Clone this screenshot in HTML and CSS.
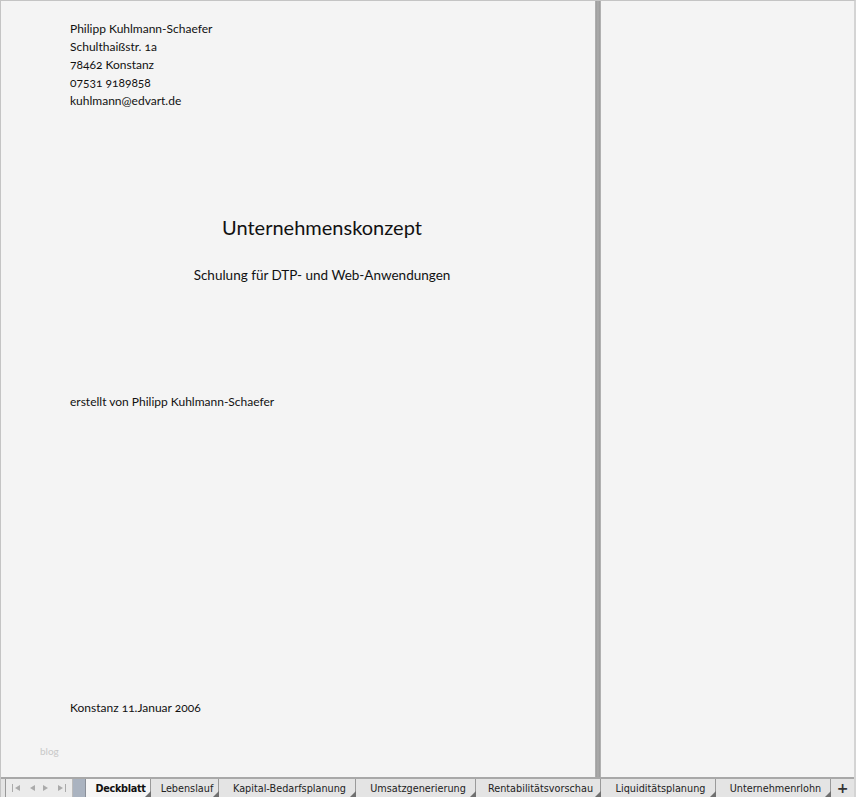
FILE: index.html
```html
<!DOCTYPE html>
<html>
<head>
<meta charset="utf-8">
<link rel="stylesheet" href="styles.css">
</head>
<body>
<div class="window">
  <div class="panes">
    <div class="left">
      <div class="address">
        <div>Philipp Kuhlmann-Schaefer</div>
        <div>Schulthaißstr. 1a</div>
        <div>78462 Konstanz</div>
        <div>07531 9189858</div>
        <div>kuhlmann@edvart.de</div>
      </div>
      <h1 class="title">Unternehmenskonzept</h1>
      <div class="subtitle">Schulung für DTP- und Web-Anwendungen</div>
      <div class="author">erstellt von Philipp Kuhlmann-Schaefer</div>
      <div class="date">Konstanz 11.Januar 2006</div>
      <div class="blog">blog</div>
    </div>
    <div class="divider"></div>
    <div class="right"></div>
  </div>
  <div class="tabbar">
    <div class="nav">
      <svg class="navicon" width="11" height="8" viewBox="0 0 11 8"><rect x="1" y="0" width="1" height="8" fill="#aaa"/><polygon points="9,1 4,4 9,7" fill="#aaa"/></svg>
      <svg class="navicon" width="8" height="8" viewBox="0 0 8 8"><polygon points="7,1 2,4 7,7" fill="#aaa"/></svg>
      <svg class="navicon" width="8" height="8" viewBox="0 0 8 8"><polygon points="1,1 6,4 1,7" fill="#aaa"/></svg>
      <svg class="navicon" width="11" height="8" viewBox="0 0 11 8"><polygon points="2,1 7,4 2,7" fill="#aaa"/><rect x="9" y="0" width="1" height="8" fill="#aaa"/></svg>
    </div>
    <div class="splitter"></div>
    <div class="tab active w65">Deckblatt</div>
    <div class="tab w68">Lebenslauf</div>
    <div class="tab w137">Kapital-Bedarfsplanung</div>
    <div class="tab w120">Umsatzgenerierung</div>
    <div class="tab w125">Rentabilitätsvorschau</div>
    <div class="tab w115">Liquiditätsplanung</div>
    <div class="tab w115">Unternehmenrlohn</div>
    <div class="tab plus">+</div>
  </div>
</div>
</body>
</html>
```
FILE: styles.css
```css
html, body {
  margin: 0;
  padding: 0;
  background: #f4f4f4;
}
.window {
  width: 856px;
  height: 797px;
  box-sizing: border-box;
  border-top: 1px solid #c4c4c4;
  border-left: 1px solid #c4c4c4;
  border-right: 2px solid #d4d4d4;
  display: flex;
  flex-direction: column;
  background: #f4f4f4;
  overflow: hidden;
}
.panes {
  display: flex;
  height: 776px;
  flex-shrink: 0;
  border-bottom: 2px solid #a8a8a8;
}
.left {
  width: 594px;
  flex-shrink: 0;
  box-sizing: border-box;
  padding: 0 0 0 69px;
  font-family: "Lato", "Open Sans", sans-serif;
  font-variant-numeric: oldstyle-nums;
  font-size: 12px;
  color: #111;
  display: flex;
  flex-direction: column;
}
.address {
  margin-top: 19px;
  line-height: 18px;
}
.title {
  margin: 105px 0 0 0;
  width: 504px;
  text-align: center;
  font-weight: normal;
  font-size: 20px;
  line-height: 24px;
}
.subtitle {
  margin-top: 27px;
  width: 504px;
  text-align: center;
  font-size: 13.5px;
  line-height: 18px;
}
.author {
  margin-top: 109px;
  line-height: 18px;
}
.date {
  margin-top: 288px;
  line-height: 18px;
}
.blog {
  margin: 28px 0 0 -30px;
  font-size: 10px;
  color: #c8c8c8;
}
.divider {
  width: 6px;
  flex-shrink: 0;
  background: linear-gradient(to right, #bdbdbd 0, #9e9e9e 1px, #ababab 3px, #9a9a9a 5px, #c8c8c8 6px);
}
.right {
  flex: 1;
}
.tabbar {
  flex: 1;
  display: flex;
  align-items: stretch;
  background: #e4e4e4;
  font-family: "DejaVu Sans", sans-serif;
  font-size: 9.7px;
  color: #222;
}
.nav {
  width: 68px;
  flex-shrink: 0;
  margin-left: 4px;
  box-sizing: border-box;
  padding: 0 5px;
  border-left: 1px solid #999;
  border-right: 1px solid #bbb;
  display: flex;
  align-items: center;
  justify-content: space-between;
  background: #ebebeb;
}
.navicon {
  display: block;
}
.splitter {
  width: 12px;
  flex-shrink: 0;
  background: #aab3c0;
  border-right: 1px solid #8a8f98;
}
.tab {
  position: relative;
  flex-shrink: 0;
  box-sizing: border-box;
  padding: 0 0 0 5px;
  display: flex;
  align-items: center;
  justify-content: center;
  border-right: 1px solid #9a9a9a;
  white-space: nowrap;
}
.tab::after {
  content: "";
  position: absolute;
  right: -1px;
  bottom: 0;
  width: 0;
  height: 0;
  border-left: 6px solid transparent;
  border-bottom: 6px solid #6f6f6f;
}
.w65 { width: 65px; }
.w68 { width: 68px; }
.w115 { width: 115px; }
.w120 { width: 120px; }
.w125 { width: 125px; }
.w137 { width: 137px; }
.tab.active {
  background: #f6f6f6;
  font-weight: bold;
  color: #111;
  letter-spacing: -0.3px;
}
.tab.plus {
  flex: 1;
  padding: 0;
  font-size: 14px;
  font-weight: bold;
  color: #333;
  border-right: none;
}
.tab.plus::after {
  display: none;
}
```
